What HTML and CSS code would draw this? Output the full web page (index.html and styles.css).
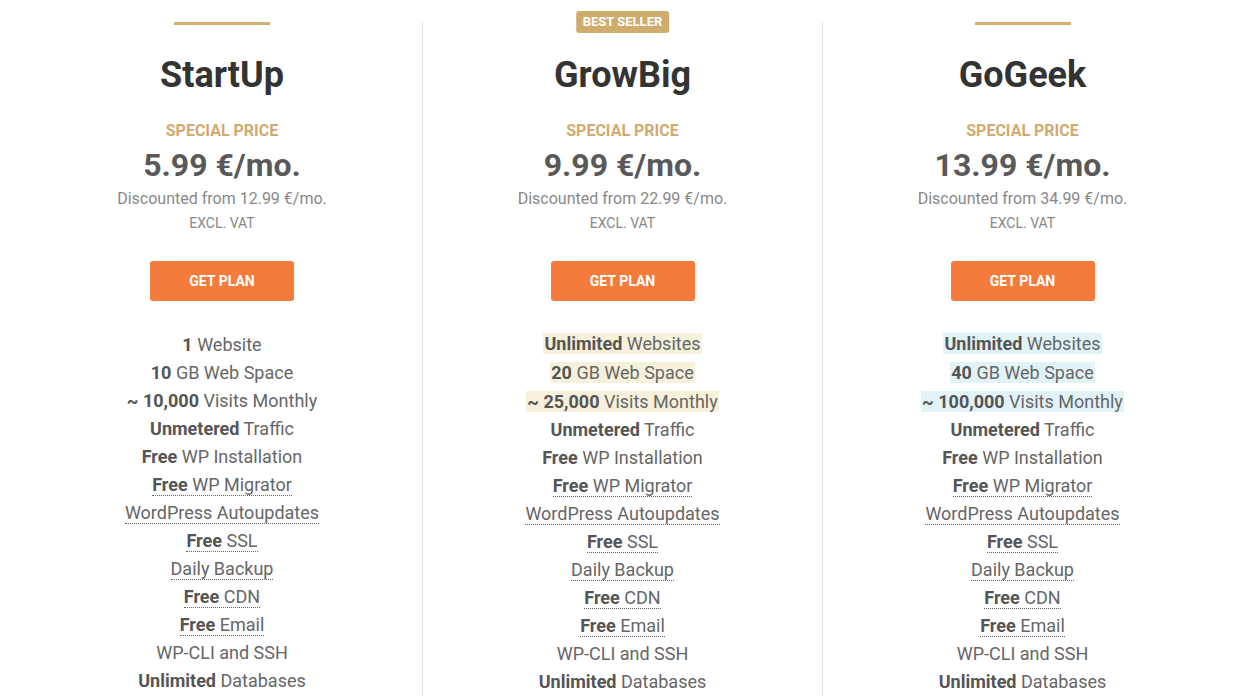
FILE: index.html
```html
<!DOCTYPE html>
<html lang="en">
<head>
  <meta charset="UTF-8">
  <meta name="viewport" content="width=device-width, initial-scale=1.0">
  <title>Hosting Plans</title>
  <link rel="stylesheet" href="styles.css">
</head>
<body>
  <main class="plans">
    <!-- StartUp -->
    <section class="plan">
      <div class="plan-bar"></div>
      <h2>StartUp</h2>
      <p class="special">Special price</p>
      <p class="price">5.99 €/mo.</p>
      <p class="old-price">Discounted from 12.99 €/mo.</p>
      <p class="vat">Excl. VAT</p>
      <a href="#" class="get-plan">Get plan</a>
      <ul class="features">
        <li><b>1</b> Website</li>
        <li><b>10</b> GB Web Space</li>
        <li><b>~ 10,000</b> Visits Monthly</li>
        <li><b>Unmetered</b> Traffic</li>
        <li><b>Free</b> WP Installation</li>
        <li><span class="tip"><b>Free</b> WP Migrator</span></li>
        <li><span class="tip">WordPress Autoupdates</span></li>
        <li><span class="tip"><b>Free</b> SSL</span></li>
        <li><span class="tip">Daily Backup</span></li>
        <li><span class="tip"><b>Free</b> CDN</span></li>
        <li><span class="tip"><b>Free</b> Email</span></li>
        <li>WP-CLI and SSH</li>
        <li><b>Unlimited</b> Databases</li>
      </ul>
    </section>

    <!-- GrowBig -->
    <section class="plan">
      <span class="badge">Best seller</span>
      <h2>GrowBig</h2>
      <p class="special">Special price</p>
      <p class="price">9.99 €/mo.</p>
      <p class="old-price">Discounted from 22.99 €/mo.</p>
      <p class="vat">Excl. VAT</p>
      <a href="#" class="get-plan">Get plan</a>
      <ul class="features features-hl">
        <li class="hl"><span class="mark gold"><b>Unlimited</b> Websites</span></li>
        <li class="hl"><span class="mark gold"><b>20</b> GB Web Space</span></li>
        <li class="hl"><span class="mark gold"><b>~ 25,000</b> Visits Monthly</span></li>
        <li><b>Unmetered</b> Traffic</li>
        <li><b>Free</b> WP Installation</li>
        <li><span class="tip"><b>Free</b> WP Migrator</span></li>
        <li><span class="tip">WordPress Autoupdates</span></li>
        <li><span class="tip"><b>Free</b> SSL</span></li>
        <li><span class="tip">Daily Backup</span></li>
        <li><span class="tip"><b>Free</b> CDN</span></li>
        <li><span class="tip"><b>Free</b> Email</span></li>
        <li>WP-CLI and SSH</li>
        <li><b>Unlimited</b> Databases</li>
      </ul>
    </section>

    <!-- GoGeek -->
    <section class="plan">
      <div class="plan-bar"></div>
      <h2>GoGeek</h2>
      <p class="special">Special price</p>
      <p class="price">13.99 €/mo.</p>
      <p class="old-price">Discounted from 34.99 €/mo.</p>
      <p class="vat">Excl. VAT</p>
      <a href="#" class="get-plan">Get plan</a>
      <ul class="features features-hl">
        <li class="hl"><span class="mark blue"><b>Unlimited</b> Websites</span></li>
        <li class="hl"><span class="mark blue"><b>40</b> GB Web Space</span></li>
        <li class="hl"><span class="mark blue"><b>~ 100,000</b> Visits Monthly</span></li>
        <li><b>Unmetered</b> Traffic</li>
        <li><b>Free</b> WP Installation</li>
        <li><span class="tip"><b>Free</b> WP Migrator</span></li>
        <li><span class="tip">WordPress Autoupdates</span></li>
        <li><span class="tip"><b>Free</b> SSL</span></li>
        <li><span class="tip">Daily Backup</span></li>
        <li><span class="tip"><b>Free</b> CDN</span></li>
        <li><span class="tip"><b>Free</b> Email</span></li>
        <li>WP-CLI and SSH</li>
        <li><b>Unlimited</b> Databases</li>
      </ul>
    </section>
  </main>
</body>
</html>
```
FILE: styles.css
```css
body {
  font-family: Roboto, "Liberation Sans", Arial, sans-serif;
  background-color: #fff;
  color: #555;
  margin: 0;
  padding: 0;
}

.plans {
  width: 1200px;
  margin: 0 auto;
  padding-top: 22px;
  display: grid;
  grid-template-columns: repeat(3, 1fr);
}

.plan {
  position: relative;
  display: flex;
  flex-direction: column;
  align-items: center;
  text-align: center;
  padding-top: 3px;
}

.plan + .plan {
  border-left: 1px solid #e2e2e2;
}

.plan-bar {
  width: 96px;
  height: 3px;
  margin-top: -3px;
  background-color: #d2ae72;
}

.badge {
  position: absolute;
  top: -11px;
  left: 50%;
  transform: translateX(-50%);
  background-color: #cfab6e;
  color: #fff;
  font-size: 13px;
  font-weight: 700;
  line-height: 22px;
  padding: 0 7px;
  border-radius: 3px;
  text-transform: uppercase;
  white-space: nowrap;
}

.plan h2 {
  margin: 30px 0 0;
  font-size: 36px;
  line-height: 40px;
  font-weight: 700;
  color: #333;
}

.plan p {
  margin: 0;
}

.special {
  margin-top: 26px !important;
  font-size: 16px;
  line-height: 20px;
  font-weight: 700;
  color: #d0aa70;
  text-transform: uppercase;
}

.price {
  margin-top: 6px !important;
  font-size: 32px;
  line-height: 36px;
  font-weight: 700;
  color: #595959;
}

.old-price {
  margin-top: 6px !important;
  font-size: 16px;
  line-height: 20px;
  color: #888;
}

.vat {
  margin-top: 6px !important;
  font-size: 14px;
  line-height: 16px;
  color: #888;
  text-transform: uppercase;
}

.get-plan {
  margin-top: 30px;
  width: 144px;
  height: 40px;
  line-height: 40px;
  background-color: #f57b3c;
  color: #fff;
  font-size: 14px;
  font-weight: 700;
  text-decoration: none;
  text-transform: uppercase;
  border-radius: 3px;
}

.features {
  list-style: none;
  padding: 0;
  margin: 30px 0 0;
  font-size: 18px;
  line-height: 28px;
  color: #666;
}

.features b {
  font-weight: 700;
  color: #555;
}

.features-hl {
  margin-top: 28px;
}

.features li.hl {
  line-height: 29px;
}

.mark {
  padding: 0 1px;
}

.mark.gold {
  background-color: #f7f1db;
}

.mark.blue {
  background-color: #e2f3f8;
}

.tip {
  border-bottom: 1px dotted #666;
}
```
